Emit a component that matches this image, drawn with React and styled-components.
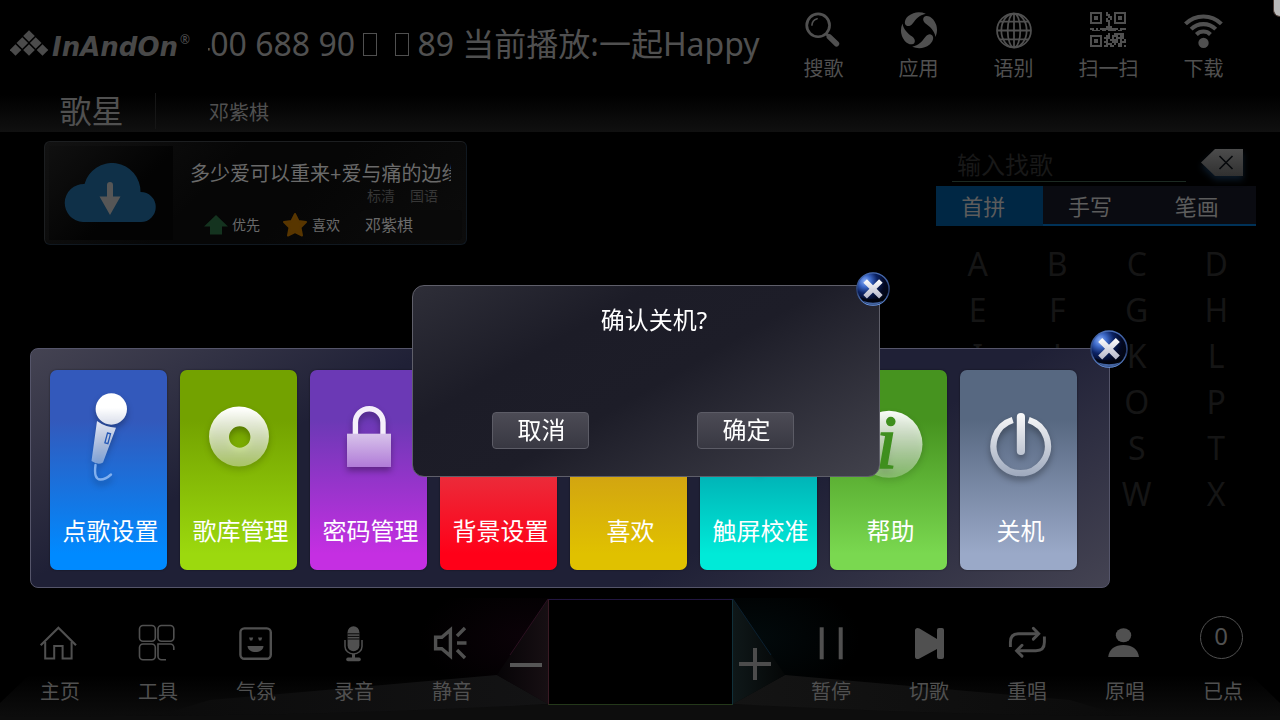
import React from 'react'
import styled, { createGlobalStyle } from 'styled-components'

const SearchIcon = () => (
    <svg viewBox='0 0 40 40' fill='none' stroke='currentColor'>
        <circle cx='14' cy='14.7' r='11.7' strokeWidth='2.8' />
        <path d='M7.6 14.5Q8 9.5 13 8' strokeWidth='1.6' strokeLinecap='round' />
        <path d='M25.500 26.5L32.8 33.6' strokeWidth='5.6' strokeLinecap='round' />
        <path d='M22.4 23.4l2.6 2.6' strokeWidth='3' />
    </svg>
)

const AppsIcon = () => (
    <svg viewBox='0 0 40 40' fill='currentColor'>
        {[0, 90, 180, 270].map((a) => (
            <path
                key={a}
                transform={`translate(20 19.7) rotate(${a})`}
                d='M7 -17A18.3 18.3 0 0 0 -11 -14.6C-15 -11 -15.500 -6.500 -13 -4.800C-11 -3.600 -8.500 -4.500 -6.500 -7C-3 -11.500 0 -15.500 7 -17Z'
            />
        ))}
    </svg>
)

const GlobeIcon = () => (
    <svg viewBox='0 0 40 40' fill='none' stroke='currentColor' strokeWidth='1.8'>
        <circle cx='20' cy='20' r='17.4' />
        <ellipse cx='20' cy='20' rx='6.5' ry='17.4' />
        <ellipse cx='20' cy='20' rx='13' ry='17.4' />
        <path d='M20 2.600v34.800M2.600 20h34.800M5.600 11h28.800M5.600 29h28.800' />
    </svg>
)

const qrRows = [
    '######..#...######',
    '#....#..##..#....#',
    '#.##.#...##.#.##.#',
    '#.##.#..#.#.#.##.#',
    '#....#..##..#....#',
    '######...#..######',
    '.........#........',
    '........###.......',
    '##.#.#########.###',
    '.####.##.####.##..',
    '..................',
    '.........#..#####.',
    '######..##.###.##.',
    '#....#.###.#.####.',
    '#.##.#..#.####.#.#',
    '#.##.#.##..###.###',
    '#....#..###.#.##..',
    '######.##.##..##.#',
]

const QrIcon = () => (
    <svg viewBox='0 0 40 40' fill='currentColor' shapeRendering='crispEdges'>
        <g transform='translate(1 1) scale(2)'>
            {qrRows.map((row, y) =>
                row.split('').map((c, x) => c === '#' && <rect key={`${x}-${y}`} x={x} y={y} width='1' height='1' />)
            )}
        </g>
    </svg>
)

const WifiIcon = () => (
    <svg viewBox='0 0 40 40' fill='none' stroke='currentColor' strokeWidth='4.200'>
        <path d='M1 13.200A26 26 0 0 1 37.800 13.200' />
        <path d='M6.800 18.600A18 18 0 0 1 32 18.600' />
        <path d='M12.200 24A10.400 10.400 0 0 1 26.600 24' />
        <circle cx='19.500' cy='32.700' r='5.300' fill='currentColor' stroke='none' />
    </svg>
)

const HomeIcon = () => (
    <svg viewBox='0 0 44 44' fill='none' stroke='currentColor' strokeWidth='2'>
        <path d='M2.700 24.300L20.400 6.800L38 24.300' strokeWidth='2.200' />
        <path d='M7.200 21v16.600h9V25h8.400v12.600h9V21' />
    </svg>
)

const ToolsIcon = () => (
    <svg viewBox='0 0 44 44' fill='none' stroke='currentColor' strokeWidth='1.600'>
        <rect x='3.500' y='4.500' width='15.800' height='15.800' rx='3.500' />
        <rect x='22' y='4.500' width='15.800' height='15.800' rx='3.500' />
        <rect x='3.500' y='23' width='15.800' height='15.800' rx='3.500' />
        <path d='M30 38.800h-4.500a3.500 3.500 0 0 1-3.500-3.500V23h12.300a3.500 3.500 0 0 1 3.500 3.500V29' />
    </svg>
)

const SmileIcon = () => (
    <svg viewBox='0 0 44 44' fill='none' stroke='currentColor' strokeWidth='2.400'>
        <rect x='6.400' y='7.400' width='30.400' height='30.400' rx='4' />
        <path d='M13.500 25h16c-.5 8-15.500 8-16 0z' fill='currentColor' stroke='none' />
        <path d='M15 16.500h4.200l-1 3h-2.200zM24 16.500h4.200l-1 3H25z' fill='currentColor' stroke='none' />
    </svg>
)

const RecordIcon = () => (
    <svg viewBox='0 0 44 44' fill='none' stroke='currentColor'>
        <rect x='15.600' y='5.300' width='11.800' height='25' rx='5.900' fill='currentColor' stroke='none' />
        <path d='M15.500 12.800h12M15.500 15.400h12M15.500 18h12' stroke='#000' strokeWidth='.9' />
        <path d='M13 19v6.500a8.500 7.500 0 0 0 17 0V19' strokeWidth='1.500' />
        <path d='M21.500 33v4' strokeWidth='3' />
        <path d='M16 38.400h11' strokeWidth='3.600' strokeLinecap='round' />
    </svg>
)

const MuteIcon = () => (
    <svg viewBox='0 0 44 44' fill='none' stroke='currentColor' strokeWidth='3.400'>
        <path d='M5.600 16.300h6.200L20.400 9v26l-8.600-7.300H5.600z' />
        <path d='M27 15l8-8M27 22h9.500M27 29l8 8' />
    </svg>
)

const PauseIcon = () => (
    <svg viewBox='0 0 44 44' fill='currentColor'>
        <rect x='10.700' y='6.300' width='4' height='32' />
        <rect x='29.700' y='6.300' width='4' height='32' />
    </svg>
)

const NextIcon = () => (
    <svg viewBox='0 0 44 44' fill='currentColor'>
        <path d='M8 9.500C8 7 10.500 6.200 12.500 7.500L30 18V9q0-2 2-2h3q2 0 2 2v27q0 2-2 2h-3q-2 0-2-2v-8L12.500 37.500C10.500 38.800 8 38 8 35.500z' />
    </svg>
)

const RepeatIcon = () => (
    <svg viewBox='0 0 44 44' fill='none' stroke='currentColor' strokeWidth='2.900'>
        <path d='M5.400 26v-5q0-8.300 8.300-8.300H33' />
        <path d='M28.300 7.300l5.400 5.400l-5.400 5.400' strokeLinecap='round' />
        <path d='M39.400 15.500v5.700q0 8.500-8.500 8.500H12' />
        <path d='M17 24.300l-5.400 5.400l5.400 5.400' strokeLinecap='round' />
    </svg>
)

const UserIcon = () => (
    <svg viewBox='0 0 44 44' fill='currentColor'>
        <ellipse cx='20.500' cy='14.300' rx='7.700' ry='7' />
        <path d='M5.200 36C6 28 12 24 20.500 24S35 28 36 36z' />
    </svg>
)

const CloseOrb = () => (
    <svg viewBox='0 0 38 38'>
        <defs>
            <radialGradient id='orb' cx='26%' cy='26%' r='75%'>
                <stop offset='0' stopColor='#8db2fa' />
                <stop offset='.24' stopColor='#3d69c8' />
                <stop offset='.5' stopColor='#0b2263' />
                <stop offset='.8' stopColor='#020822' />
                <stop offset='1' stopColor='#020614' />
            </radialGradient>
            <linearGradient id='orbRim' x1='0' y1='0' x2='0' y2='1'>
                <stop offset='0' stopColor='#4a6fb8' />
                <stop offset='.6' stopColor='#273d70' />
                <stop offset='1' stopColor='#6c9cf0' />
            </linearGradient>
            <linearGradient id='orbCross' x1='0' y1='0' x2='0' y2='1'>
                <stop offset='0' stopColor='#fff' />
                <stop offset='1' stopColor='#b4b6c8' />
            </linearGradient>
        </defs>
        <circle cx='19' cy='19' r='18' fill='url(#orb)' stroke='url(#orbRim)' strokeWidth='1.600' />
        <path d='M4 28a17 17 0 0 0 30 0q-15 5-30 0z' fill='#000' opacity='.5' />
        <path d='M8 32.500a17 17 0 0 0 22 0q-11 3.500-22 0z' fill='#5e8be0' opacity='.7' />
        <path
            d='M19 14.800L25.800 8l4 4l-6.800 6.800l6.800 6.800l-4 4L19 22.800l-6.800 6.800l-4-4l6.800-6.800L8.200 12l4-4z'
            fill='url(#orbCross)'
        />
    </svg>
)

const InfoMark = styled.text`
font-family: 'Liberation Serif', serif;
font-size: 76px;
font-style: italic;
`

const tiles = [
    {
        name: '点歌设置',
        from: '#3359bb',
        to: '#008aff',
        art: (
            <>
                <circle cx='61.300' cy='39' r='15.700' fill='url(#shine)' />
                <path d='M47 51Q55 57 66 57.700L53 92.500Q48 95.500 41.500 91z' fill='url(#shine)' />
                <path d='M57.500 63l3 .8l-2.600 9.800l-3-.8z' fill='none' stroke='#2457b5' strokeWidth='1.300' />
                <path d='M45.500 95q-2 14.500 5 14.500q5 0 10.500-5' fill='none' stroke='#82b0ee' strokeWidth='2.400' strokeLinecap='round' />
            </>
        ),
    },
    {
        name: '歌库管理',
        from: '#73a200',
        to: '#9cd90e',
        art: <path fillRule='evenodd' fill='url(#shine)' d='M29 66.500a30 30 0 1 0 60 0a30 30 0 1 0-60 0zM49 67a10.700 10.700 0 1 0 21.400 0a10.700 10.700 0 1 0-21.400 0z' />,
    },
    {
        name: '密码管理',
        from: '#6b39b5',
        to: '#c52fe2',
        art: (
            <>
                <path d='M45.400 64V52.500a13.800 13.800 0 0 1 27.600 0V64' fill='none' stroke='#f4effa' strokeWidth='5.400' />
                <rect x='37' y='63.700' width='44' height='33.300' fill='url(#plate)' />
            </>
        ),
    },
    {
        name: '背景设置',
        from: '#dd4a52',
        to: '#ff0018',
        art: <path fillRule='evenodd' fill='url(#shine)' d='M30 42h58v48H30zM36 48v30l14-15l12 12l8-7l12 12V48z' />,
    },
    {
        name: '喜欢',
        from: '#c9911c',
        to: '#e0c100',
        art: <path fill='url(#shine)' d='M59 98C20 70 30 44 44 44q10 0 15 10q5-10 15-10c14 0 24 26-15 54z' />,
    },
    {
        name: '触屏校准',
        from: '#008ea0',
        to: '#00ead8',
        art: <path fill='none' stroke='url(#shine)' strokeWidth='6' d='M59 40v62M28 71h62M39 71a20 20 0 1 0 40 0a20 20 0 1 0-40 0z' />,
    },
    {
        name: '帮助',
        from: '#46931f',
        to: '#7ad850',
        art: (
            <>
                <circle cx='59' cy='74.300' r='33.500' fill='url(#shine)' />
                <InfoMark x='46' y='98' fill='#3f8f1e' stroke='#3f8f1e' strokeWidth='1.500'>i</InfoMark>
            </>
        ),
    },
    {
        name: '关机',
        from: '#576881',
        to: '#9aa9c8',
        art: (
            <>
                <path d='M52.700 50A27.200 27.200 0 1 0 68.700 50' fill='none' stroke='url(#metal)' strokeWidth='6.300' />
                <rect x='56.800' y='43' width='8.200' height='42' rx='4' fill='url(#metal)' />
            </>
        ),
    },
]

const nav = [
    ['搜歌', SearchIcon],
    ['应用', AppsIcon],
    ['语别', GlobeIcon],
    ['扫一扫', QrIcon],
    ['下载', WifiIcon],
]

const leftControls = [
    ['主页', HomeIcon],
    ['工具', ToolsIcon],
    ['气氛', SmileIcon],
    ['录音', RecordIcon],
    ['静音', MuteIcon],
]

const rightControls = [
    ['暂停', PauseIcon],
    ['切歌', NextIcon],
    ['重唱', RepeatIcon],
    ['原唱', UserIcon],
]

const letters = 'ABCDEFGHIJKLMNOPQRSTUVWXYZ'.split('')

function Header() {
    return (
        <Top>
            <Brand>
                <svg width='40' height='28' viewBox='0 0 40 28' fill='#4b4b4b'>
                    {[[19, 7], [12.300, 14], [25.700, 14], [5.500, 21], [19, 21], [32.500, 21]].map(([x, y]) => (
                        <path key={`${x}-${y}`} d={`M${x} ${y - 5.700}l5.800 5.700l-5.800 5.700l-5.800-5.700z`} />
                    ))}
                </svg>
                <BrandName>InAndOn</BrandName>
                <Reg>®</Reg>
            </Brand>
            <Marquee>
                <p>400 688 90 <Tofu /><Tofu />89 当前播放:一起Happy</p>
            </Marquee>
            <Nav>
                {nav.map(([name, Icon]) => (
                    <NavButton key={name}>
                        <Icon />
                        {name}
                    </NavButton>
                ))}
            </Nav>
            <Knob />
        </Top>
    )
}

function SongCard() {
    return (
        <Card>
            <Thumb>
                <svg width='92' height='60' viewBox='0 0 92 60'>
                    <path
                        d='M19 59A19 19 0 0 1 20.500 21A28.500 28.500 0 0 1 76.500 29A15 15 0 0 1 77 59z'
                        fill='#0f3048'
                    />
                    <path d='M43 22q0-3 3-3t3 3v11.500h7.500L46 52L35.500 33.500h7.500z' fill='#565656' />
                </svg>
            </Thumb>
            <Song>
                <h2>多少爱可以重来+爱与痛的边缘</h2>
                <Tags>
                    <span>标清</span>
                    <span>国语</span>
                </Tags>
                <Actions>
                    <Action>
                        <svg width='24' height='22' viewBox='0 0 24 22'>
                            <path d='M12 1L24 12.500H18V20.500H6V12.500H0z' fill='#14331f' />
                        </svg>
                        优先
                    </Action>
                    <Action>
                        <svg width='26' height='26' viewBox='0 0 26 26'>
                            <path
                                d='M13 2L16.500 9L24 10L18.500 15.500L20 23.500L13 20L6 23.500L7.500 15.500L2 10L9.500 9z'
                                fill='#583600'
                                stroke='#583600'
                                strokeWidth='2'
                                strokeLinejoin='round'
                            />
                        </svg>
                        喜欢
                    </Action>
                    <Singer href='#singer'>邓紫棋</Singer>
                </Actions>
            </Song>
        </Card>
    )
}

function Finder() {
    return (
        <FinderWrap>
            <SearchRow>
                <input type='text' placeholder='输入找歌' aria-label='输入找歌' />
                <Backspace aria-label='删除'>
                    <svg width='42' height='28' viewBox='0 0 42 28'>
                        <defs>
                            <linearGradient id='key' x1='0' y1='0' x2='0' y2='1'>
                                <stop offset='0' stopColor='#4c4c4c' />
                                <stop offset='1' stopColor='#303030' />
                            </linearGradient>
                        </defs>
                        <path d='M0 13.500L14 0h28v27H14z' fill='url(#key)' />
                        <path d='M18.500 7l13 13M31.500 7l-13 13' stroke='#06080b' strokeWidth='1.600' />
                    </svg>
                </Backspace>
            </SearchRow>
            <Tabs role='tablist'>
                <Tab role='tab' aria-selected='true' $active>首拼</Tab>
                <Tab role='tab' aria-selected='false'>手写</Tab>
                <Tab role='tab' aria-selected='false'>笔画</Tab>
            </Tabs>
            <Keys>
                {letters.map((l) => (
                    <Key key={l}>{l}</Key>
                ))}
            </Keys>
        </FinderWrap>
    )
}

function Settings() {
    return (
        <Panel>
            <Gradients width='0' height='0'>
                <defs>
                    <linearGradient id='shine' gradientUnits='userSpaceOnUse' x1='0' y1='38' x2='0' y2='105'>
                        <stop offset='0' stopColor='#fff' />
                        <stop offset='1' stopColor='#fff' stopOpacity='.3' />
                    </linearGradient>
                    <linearGradient id='plate' x1='0' y1='0' x2='0' y2='1'>
                        <stop offset='0' stopColor='#d8c3ea' />
                        <stop offset='1' stopColor='#b07bd8' />
                    </linearGradient>
                    <linearGradient id='metal' gradientUnits='userSpaceOnUse' x1='0' y1='43' x2='0' y2='106'>
                        <stop offset='0' stopColor='#fafafa' />
                        <stop offset='1' stopColor='#9ea9bd' />
                    </linearGradient>
                </defs>
            </Gradients>
            {tiles.map((t) => (
                <Tile key={t.name} $from={t.from} $to={t.to}>
                    <svg width='117' height='140' viewBox='0 0 117 140'>{t.art}</svg>
                    <span>{t.name}</span>
                </Tile>
            ))}
            <Close aria-label='关闭设置' $size='38px' $top='-19px' $right='-19px'>
                <CloseOrb />
            </Close>
        </Panel>
    )
}

function ConfirmDialog() {
    return (
        <Overlay>
            <Dialog role='dialog' aria-labelledby='confirm-title'>
                <h1 id='confirm-title'>确认关机?</h1>
                <Choices>
                    <Choice>取消</Choice>
                    <Choice>确定</Choice>
                </Choices>
                <Close aria-label='关闭' $size='34px' $top='-14px' $right='-11px'>
                    <CloseOrb />
                </Close>
            </Dialog>
        </Overlay>
    )
}

function Footer() {
    return (
        <Bottom>
            <Stage viewBox='0 0 1280 122' preserveAspectRatio='none'>
                <defs>
                    <linearGradient id='floor' x1='0' y1='0' x2='0' y2='1'>
                        <stop offset='.25' stopColor='#000' />
                        <stop offset='.85' stopColor='#0b0b0b' />
                        <stop offset='1' stopColor='#0d0d0d' />
                    </linearGradient>
                    <linearGradient id='plateL' x1='0' x2='1'>
                        <stop offset='0' stopColor='#0b0b0b' />
                        <stop offset='1' stopColor='#131314' />
                    </linearGradient>
                    <linearGradient id='plateR' x1='1' x2='0'>
                        <stop offset='0' stopColor='#0b0b0b' />
                        <stop offset='1' stopColor='#141414' />
                    </linearGradient>
                    <linearGradient id='wingL' x1='0' x2='1'>
                        <stop offset='0' stopColor='#060406' />
                        <stop offset='1' stopColor='#170f13' />
                    </linearGradient>
                    <linearGradient id='wingR' x1='1' x2='0'>
                        <stop offset='0' stopColor='#040606' />
                        <stop offset='1' stopColor='#0f1819' />
                    </linearGradient>
                    <radialGradient id='glowL'>
                        <stop offset='0' stopColor='#0b0208' />
                        <stop offset='1' stopColor='#0b0208' stopOpacity='0' />
                    </radialGradient>
                    <radialGradient id='glowR'>
                        <stop offset='0' stopColor='#020a0c' />
                        <stop offset='1' stopColor='#020a0c' stopOpacity='0' />
                    </radialGradient>
                </defs>
                <path d='M0 105L45 62H1235L1280 105V122H0z' fill='url(#floor)' />
                <ellipse cx='530' cy='40' rx='110' ry='60' fill='url(#glowL)' />
                <ellipse cx='750' cy='40' rx='110' ry='60' fill='url(#glowR)' />
                <path d='M210 102L497 77L548 106L400 120H150z' fill='url(#plateL)' />
                <path d='M1070 102L785 77L733 106L880 120H1130z' fill='url(#plateR)' />
                <path d='M548 1L497 77L548 106z' fill='url(#wingL)' />
                <path d='M733 1L785 77L733 106z' fill='url(#wingR)' />
                <path d='M548 1L510 57' stroke='#2b1020' />
                <path d='M733 1L771 57' stroke='#0b2030' />
                <path d='M0 122V118Q300 120 548 106H733Q980 120 1280 118V122z' fill='#0d0d0d' />
            </Stage>
            <Controls>
                {leftControls.map(([name, Icon]) => (
                    <Control key={name}>
                        <Slot><Icon /></Slot>
                        {name}
                    </Control>
                ))}
            </Controls>
            <Volume>
                <Step aria-label='音量减'>
                    <svg width='32' height='32' viewBox='0 0 32 32' fill='#565656'>
                        <rect x='0' y='15' width='32' height='4' />
                    </svg>
                </Step>
                <Screen />
                <Step aria-label='音量加'>
                    <svg width='32' height='32' viewBox='0 0 32 32' fill='#4c4c4c'>
                        <rect x='0' y='14' width='32' height='4' />
                        <rect x='14' y='0' width='4' height='32' />
                    </svg>
                </Step>
            </Volume>
            <Controls>
                {rightControls.map(([name, Icon]) => (
                    <Control key={name}>
                        <Slot><Icon /></Slot>
                        {name}
                    </Control>
                ))}
                <Control>
                    <Slot><Count>0</Count></Slot>
                    已点
                </Control>
            </Controls>
        </Bottom>
    )
}

function App() {
    return (
        <Page>
            <GlobalStyle />
            <Header />
            <SubBar>
                <strong>歌星</strong>
                <span>邓紫棋</span>
            </SubBar>
            <Main>
                <SongCard />
                <Finder />
            </Main>
            <Footer />
            <Settings />
            <ConfirmDialog />
        </Page>
    )
}

export default App

const GlobalStyle = createGlobalStyle`
* {
    box-sizing: border-box;
}

body {
    margin: 0;
    background: #000;
}

body, button, input {
    font-family: 'Noto Sans', 'Noto Sans CJK SC', sans-serif;
}

button {
    border: none;
    padding: 0;
    background: none;
    color: inherit;
    cursor: pointer;
}

h1, h2, p {
    margin: 0;
    font-weight: 400;
}

svg {
    display: block;
}
`

const Page = styled.div`
position: relative;
display: flex;
flex-direction: column;
min-height: 100vh;
color: #505050;
overflow: hidden;
`

const Top = styled.header`
position: relative;
display: flex;
height: 88px;
padding: 0 29px 0 10px;
`

const Brand = styled.div`
display: flex;
align-items: center;
width: 198px;
padding-bottom: 2px;
`

const BrandName = styled.span`
margin-left: 2px;
padding-top: 8px;
color: #484848;
font-family: 'DejaVu Sans', sans-serif;
font-size: 26px;
font-style: italic;
font-weight: 700;
line-height: 32px;
`

const Reg = styled.span`
align-self: flex-start;
margin: 32px 0 0 2px;
font-size: 12px;
line-height: 16px;
`

const Marquee = styled.div`
flex: 1;
min-width: 0;
overflow: hidden;

    p{
        margin-left: -16px;
        font-size: 32px;
        line-height: 88px;
        white-space: nowrap;
    }
`

const Tofu = styled.span`
display: inline-block;
width: 14px;
height: 23px;
margin-right: 18px;
border: 1px solid #505050;

    & + &{
        margin-right: 8px;
    }
`

const Nav = styled.nav`
display: flex;
`

const NavButton = styled.button`
display: flex;
flex-direction: column;
align-items: center;
width: 95px;
padding-top: 11px;
font-size: 20px;
line-height: 38px;

    svg{
        width: 40px;
        height: 40px;
    }
`

const Knob = styled.span`
position: absolute;
top: 0;
right: 0;
width: 7px;
height: 17px;
background: #b9b9b9;
border: 1px solid #4a3a34;
border-width: 0 0 1px 1px;
border-radius: 0 0 0 7px;
`

const SubBar = styled.div`
display: flex;
align-items: center;
height: 44px;
padding: 2px 0 0 28px;
background: linear-gradient(#000 15%, #101010);

    strong{
        width: 128px;
        border-right: 1px solid #161616;
        font-size: 32px;
        font-weight: 400;
        line-height: 36px;
        text-align: center;
    }

    span{
        margin-left: 53px;
        font-size: 20px;
    }
`

const Main = styled.main`
display: flex;
justify-content: space-between;
flex: 1;
padding: 9px 24px 0 44px;
`

const Card = styled.article`
display: flex;
align-self: flex-start;
width: 423px;
height: 104px;
padding: 4px;
border: 1px solid #101820;
border-top-color: #1c1e20;
border-left-color: #1c1e20;
border-radius: 6px;
background: linear-gradient(135deg, #121212, #060606 40%, #060606 60%, #0c0c0c);
`

const Thumb = styled.div`
display: flex;
align-items: center;
justify-content: center;
width: 124px;
padding-right: 2px;
background: linear-gradient(135deg, #101010, #030303 60%);
`

const Song = styled.div`
display: flex;
flex-direction: column;
flex: 1;
min-width: 0;
color: #6a6a6a;

    h2{
        width: 261px;
        margin: 12px 0 0 17px;
        overflow: hidden;
        font-size: 20px;
        line-height: 32px;
        white-space: nowrap;
    }
`

const Tags = styled.div`
display: flex;
justify-content: flex-end;
gap: 15px;
padding-right: 24px;
color: #363636;
font-size: 14px;
line-height: 20px;
`

const Actions = styled.div`
display: flex;
align-items: center;
height: 30px;
margin: 4px 0 0 31px;
`

const Action = styled.button`
display: flex;
align-items: center;
gap: 4px;
width: 78px;
font-size: 14px;
line-height: 30px;
`

const Singer = styled.a`
flex: 1;
padding-left: 5px;
border-radius: 4px;
background: #090909;
color: inherit;
font-size: 16px;
line-height: 30px;
text-decoration: none;
`

const FinderWrap = styled.section`
width: 320px;
`

const SearchRow = styled.div`
display: flex;
align-items: flex-end;
justify-content: space-between;
height: 45px;
padding: 0 13px 4px 16px;

    input{
        width: 234px;
        height: 36px;
        padding: 2px 5px 0;
        border: none;
        border-bottom: 1px solid #1c2a22;
        outline: none;
        background: transparent;
        color: #505050;
        font-size: 24px;

        &::placeholder{
            color: #181818;
            opacity: 1;
        }
    }
`

const Backspace = styled.button`
align-self: flex-start;
margin-top: 8px;
filter: drop-shadow(0 4px 3px #0a1826);
`

const Tabs = styled.div`
display: grid;
grid-template-columns: repeat(3, 1fr);
height: 40px;
border-bottom: 2px solid #003258;
background: #0a0b11;
`

const Tab = styled.button`
padding-right: 12px;
background: ${(p) => (p.$active ? '#002744' : 'transparent')};
color: #5c5c5c;
font-size: 22px;
line-height: 40px;
`

const Keys = styled.div`
display: grid;
grid-template-columns: repeat(4, 1fr);
margin-top: 15px;
padding-left: 2px;
`

const Key = styled.button`
color: #151515;
font-size: 32px;
line-height: 46px;
`

const Panel = styled.section`
position: absolute;
bottom: 132px;
left: 30px;
display: flex;
gap: 13px;
padding: 21px 32px 17px 19px;
border: 1px solid #55556a;
border-radius: 8px;
background: linear-gradient(150deg, #444352, #1f2036 27%, #1f2036 68%, #444352);
`

const Gradients = styled.svg`
position: absolute;
`

const Tile = styled.button`
width: 117px;
height: 200px;
border-radius: 7px;
background: linear-gradient(${(p) => p.$from} 25%, ${(p) => p.$to} 92%);
color: #fff;
font-size: 24px;
line-height: 42px;
text-align: center;
box-shadow: 0 0 2px #00000080;

    svg{
        filter: drop-shadow(0 4px 3px #00000050);
    }

    span{
        display: block;
        height: 60px;
        padding-left: 4px;
    }
`

const Close = styled.button`
position: absolute;
top: ${(p) => p.$top};
right: ${(p) => p.$right};
width: ${(p) => p.$size};
height: ${(p) => p.$size};
`

const Overlay = styled.div`
position: fixed;
inset: 0;
display: flex;
align-items: center;
justify-content: center;
padding: 42px 0 0 12px;
`

const Dialog = styled.div`
position: relative;
display: flex;
flex-direction: column;
justify-content: space-between;
width: 468px;
height: 192px;
padding: 16px 85px 27px 79px;
border: 1px solid #5f5f6a;
border-radius: 12px;
background: linear-gradient(150deg, #2e2e38, #1c1c27 30%, #1d1d28 52%, #42424c);
color: #fff;

    h1{
        padding-left: 22px;
        font-size: 24px;
        line-height: 36px;
        text-align: center;
    }
`

const Choices = styled.div`
display: flex;
justify-content: space-between;
`

const Choice = styled.button`
width: 97px;
height: 37px;
padding: 0 0 2px 2px;
border: 1px solid #5c5c66;
border-radius: 4px;
background: linear-gradient(#4c4b55, #383842);
font-size: 24px;
line-height: 32px;
`

const Bottom = styled.footer`
position: relative;
display: flex;
justify-content: space-between;
height: 122px;
padding: 0 8px 0 11px;
`

const Stage = styled.svg`
position: absolute;
inset: 0;
width: 100%;
height: 100%;
`

const Controls = styled.div`
position: relative;
display: flex;
`

const Control = styled.button`
display: flex;
flex-direction: column;
align-items: center;
width: 98px;
padding-top: 18px;
font-size: 20px;
line-height: 54px;
`

const Slot = styled.span`
display: flex;
align-items: flex-end;
height: 49px;

    svg{
        width: 44px;
        height: 44px;
    }
`

const Count = styled.span`
align-self: flex-start;
width: 43px;
height: 43px;
margin-right: 4px;
border: 1px solid #505050;
border-radius: 50%;
font-size: 24px;
line-height: 38px;
`

const Volume = styled.div`
position: relative;
display: flex;
gap: 6px;
padding-right: 2px;
`

const Step = styled.button`
padding-top: 10px;
`

const Screen = styled.div`
width: 185px;
height: 106px;
border: 1px solid;
margin-top: 1px;
border-color: #221640 #10303a #24381a #3a1a24;
background: #000;
`
